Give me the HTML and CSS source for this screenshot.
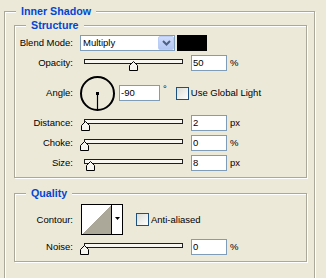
FILE: index.html
```html
<!DOCTYPE html>
<html lang="en">
<head>
    <meta charset="UTF-8">
    <title>Inner Shadow</title>
    <link rel="stylesheet" href="styles.css">
</head>
<body>
    <fieldset class="group outer">
        <legend>Inner Shadow</legend>

        <fieldset class="group structure">
            <legend>Structure</legend>
            <div class="row">
                <span class="label">Blend Mode:</span>
                <div class="select">
                    <span class="select-text">Multiply</span>
                    <span class="select-btn">
                        <svg width="9" height="6" viewBox="0 0 9 6"><path d="M1 1 L4.5 4.5 L8 1" fill="none" stroke="#4d6185" stroke-width="2"/></svg>
                    </span>
                </div>
                <div class="swatch"></div>
            </div>
            <div class="row">
                <span class="label">Opacity:</span>
                <div class="slider">
                    <div class="track"></div>
                    <svg class="thumb" style="left: 49px" width="9" height="10" viewBox="0 0 9 10"><path d="M0.5 9.5 V4.5 L4.5 0.5 L8.5 4.5 V9.5 Z" fill="#f6f5ef" stroke="#000"/></svg>
                </div>
                <input class="field" type="text" value="50">
                <span class="unit">%</span>
            </div>
            <div class="row angle-row">
                <span class="label">Angle:</span>
                <svg class="dial" width="35" height="35" viewBox="0 0 35 35">
                    <circle cx="17.5" cy="17.5" r="16.5" fill="none" stroke="#000" stroke-width="2"/>
                    <rect x="16" y="16" width="3" height="3"/>
                    <path d="M17.5 17 V33" stroke="#000" stroke-width="1.2"/>
                </svg>
                <input class="field angle" type="text" value="-90">
                <span class="deg">°</span>
                <span class="check"></span>
                <span class="check-label">Use Global Light</span>
            </div>
            <div class="row">
                <span class="label">Distance:</span>
                <div class="slider">
                    <div class="track"></div>
                    <svg class="thumb" style="left: 1px" width="9" height="10" viewBox="0 0 9 10"><path d="M0.5 9.5 V4.5 L4.5 0.5 L8.5 4.5 V9.5 Z" fill="#f6f5ef" stroke="#000"/></svg>
                </div>
                <input class="field" type="text" value="2">
                <span class="unit">px</span>
            </div>
            <div class="row">
                <span class="label">Choke:</span>
                <div class="slider">
                    <div class="track"></div>
                    <svg class="thumb" style="left: 0px" width="9" height="10" viewBox="0 0 9 10"><path d="M0.5 9.5 V4.5 L4.5 0.5 L8.5 4.5 V9.5 Z" fill="#f6f5ef" stroke="#000"/></svg>
                </div>
                <input class="field" type="text" value="0">
                <span class="unit">%</span>
            </div>
            <div class="row">
                <span class="label">Size:</span>
                <div class="slider">
                    <div class="track"></div>
                    <svg class="thumb" style="left: 6px" width="9" height="10" viewBox="0 0 9 10"><path d="M0.5 9.5 V4.5 L4.5 0.5 L8.5 4.5 V9.5 Z" fill="#f6f5ef" stroke="#000"/></svg>
                </div>
                <input class="field" type="text" value="8">
                <span class="unit">px</span>
            </div>
        </fieldset>

        <fieldset class="group quality">
            <legend>Quality</legend>
            <div class="row contour-row">
                <span class="label">Contour:</span>
                <div class="contour">
                    <div class="curve"></div>
                    <div class="contour-btn">
                        <svg width="5" height="3" viewBox="0 0 5 3"><path d="M0 0 H5 L2.5 3 Z"/></svg>
                    </div>
                </div>
                <span class="check aa"></span>
                <span class="check-label">Anti-aliased</span>
            </div>
            <div class="row">
                <span class="label">Noise:</span>
                <div class="slider">
                    <div class="track"></div>
                    <svg class="thumb" style="left: 0px" width="9" height="10" viewBox="0 0 9 10"><path d="M0.5 9.5 V4.5 L4.5 0.5 L8.5 4.5 V9.5 Z" fill="#f6f5ef" stroke="#000"/></svg>
                </div>
                <input class="field" type="text" value="0">
                <span class="unit">%</span>
            </div>
        </fieldset>
    </fieldset>
</body>
</html>
```

FILE: styles.css
```css
html, body {
    height: 278px;
    overflow: hidden;
}
body {
    margin: 0;
    background: #ece9d8;
    font-family: "Liberation Sans", Arial, sans-serif;
    font-size: 9.5px;
    color: #000;
}

/* XP style group box: grey line with a white line beside it */
.group {
    border: 1px solid #aca899;
    box-shadow: 1px 1px 0 #fff, inset 1px 1px 0 #fff;
    margin: 0;
    padding: 0;
    min-width: 0;
}
.group legend {
    font-weight: bold;
    font-size: 10.7px;
    line-height: 13px;
    color: #0046d5;
    padding: 0 5px;
    margin-left: 11px;
    background: #ece9d8;
}
.outer {
    margin: 5px 11px 0 4px;
    padding-bottom: 40px;
}
.structure {
    margin: 1px 7px 0 9px;
    padding: 3px 0 6px;
    display: flex;
    flex-direction: column;
    gap: 4px;
}
.quality {
    margin: 9px 7px 0 9px;
    padding: 4px 0 6px;
    display: flex;
    flex-direction: column;
    gap: 4px;
}

.row {
    display: flex;
    align-items: center;
    height: 16px;
    line-height: 16px;
}
.label {
    width: 58px;
    margin-right: 7px;
    text-align: right;
    flex: none;
}

/* combo box */
.select {
    width: 95px;
    height: 16px;
    box-sizing: border-box;
    border: 1px solid #7f9db9;
    background: #fff;
    display: flex;
    align-items: center;
    padding-left: 2px;
}
.select-btn {
    margin-left: auto;
    width: 16px;
    height: 14px;
    box-sizing: border-box;
    border: 1px solid #bccdf5;
    border-radius: 2px;
    background: linear-gradient(#cfdcfc, #b3c7f3);
    display: flex;
    align-items: center;
    justify-content: center;
}
.swatch {
    width: 30px;
    height: 16px;
    margin-left: 2px;
    background: #000;
}

/* slider */
.slider {
    position: relative;
    width: 107px;
    height: 16px;
    flex: none;
}
.track {
    margin: 4px 4px 0;
    height: 5px;
    box-sizing: border-box;
    border: 1px solid #1e1e1e;
    background: #f7f6f0;
}
.thumb {
    position: absolute;
    top: 6px;
}

.field {
    width: 36px;
    height: 16px;
    box-sizing: border-box;
    margin: 0 0 0 4px;
    padding: 0 1px;
    border: 1px solid #7f9db9;
    background: #fff;
    font: inherit;
    color: #000;
    outline: none;
}
.unit {
    margin-left: 3px;
}

.angle-row {
    height: 36px;
}
.dial {
    flex: none;
}
.field.angle {
    width: 41px;
}
.deg {
    align-self: flex-start;
    margin: 9px 0 0 3px;
    line-height: 10px;
}
.check {
    width: 13px;
    height: 13px;
    box-sizing: border-box;
    border: 1px solid #1c5180;
    background: linear-gradient(135deg, #dcdcd7, #fff);
    margin-left: 9px;
    flex: none;
}
.check-label {
    margin-left: 2px;
}

/* contour picker */
.contour-row {
    height: 31px;
}
.contour {
    display: flex;
    margin-left: 1px;
    height: 31px;
    box-sizing: border-box;
    border: 1px solid #000;
    background: #fff;
}
.curve {
    width: 29px;
    height: 29px;
    background: linear-gradient(to bottom right, #fff 50%, #aca899 50%);
    border-right: 1px solid #000;
}
.contour-btn {
    width: 10px;
    display: flex;
    justify-content: center;
    align-items: flex-start;
    padding-top: 12px;
    box-sizing: border-box;
}
.check.aa {
    margin-left: 13px;
}
```
